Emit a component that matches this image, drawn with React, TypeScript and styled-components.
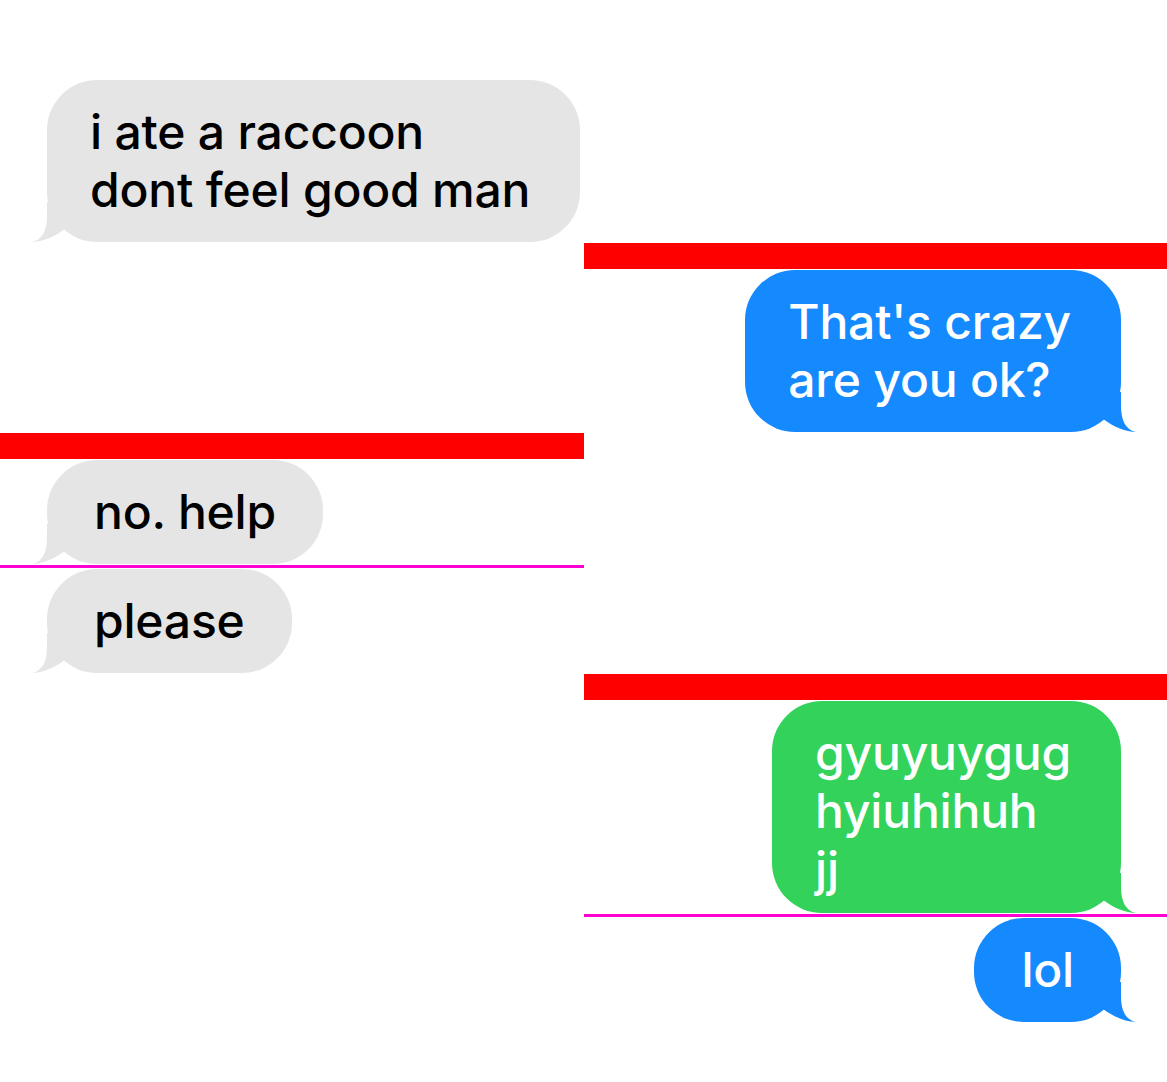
import React from "react";
import styled, { createGlobalStyle } from "styled-components";

const GlobalStyle = createGlobalStyle`
  html, body {
    margin: 0;
    padding: 0;
    background: #ffffff;
  }
  body {
    font-family: Inter, "Noto Sans", "Liberation Sans", sans-serif;
  }
`;

type Side = "left" | "right";
type Tone = "gray" | "blue" | "green";
type MarkerKind = "group" | "same" | "none";

const toneBg: Record<Tone, string> = {
  gray: "#e5e5e5",
  blue: "#1589fe",
  green: "#32d25b",
};

const Thread = styled.main`
  display: flex;
  flex-direction: column;
  gap: 1px;
  width: 1167px;
  padding-top: 80px;
`;

const Row = styled.section<{ $side: Side }>`
  width: 50%;
  align-self: ${(p) => (p.$side === "left" ? "flex-start" : "flex-end")};
  display: flex;
  flex-direction: column;
  gap: 1px;
  align-items: ${(p) => (p.$side === "left" ? "flex-start" : "flex-end")};
`;

const Marker = styled.div<{ $kind: MarkerKind }>`
  align-self: stretch;
  height: ${(p) => (p.$kind === "group" ? "26px" : "3px")};
  background: ${(p) => (p.$kind === "group" ? "#ff0000" : "#ff00d2")};
`;

const Bubble = styled.div<{
  $side: Side;
  $tone: Tone;
  $multi: boolean;
  $bottom: number;
}>`
  position: relative;
  box-sizing: border-box;
  margin: ${(p) => (p.$side === "left" ? "0 0 0 47px" : "0 46px 0 0")};
  padding: 23px ${(p) => (p.$multi ? "50px" : "47px")} ${(p) => p.$bottom}px
    ${(p) => (p.$multi ? "43px" : "47px")};
  border-radius: 50px;
  background: ${(p) => toneBg[p.$tone]};
  color: ${(p) => (p.$tone === "gray" ? "#000000" : "#ffffff")};
  font-family: Inter, "Noto Sans", "Liberation Sans", sans-serif;
  font-size: 48px;
  font-weight: 500;
  letter-spacing: -0.2px;
  line-height: 58px;
  white-space: nowrap;
`;

const Tail = styled.svg<{ $side: Side }>`
  position: absolute;
  bottom: 0;
  width: 56px;
  height: 40px;
  ${(p) =>
    p.$side === "right"
      ? "right: -16px;"
      : "left: -16px; transform: scaleX(-1);"}
`;

type Message = {
  side: Side;
  tone: Tone;
  marker: MarkerKind;
  lines: string[];
  bottom?: number;
};

const messages: Message[] = [
  { side: "left", tone: "gray", marker: "none", lines: ["i ate a raccoon", "dont feel good man"] },
  { side: "right", tone: "blue", marker: "group", lines: ["That's crazy", "are you ok?"] },
  { side: "left", tone: "gray", marker: "group", lines: ["no. help"] },
  { side: "left", tone: "gray", marker: "same", lines: ["please"] },
  { side: "right", tone: "green", marker: "group", lines: ["gyuyuygug", "hyiuhihuh", "jj"], bottom: 15 },
  { side: "right", tone: "blue", marker: "same", lines: ["lol"] },
];

function BubbleTail({ side, tone }: { side: Side; tone: Tone }) {
  return (
    <Tail $side={side} viewBox="0 0 56 40" aria-hidden="true">
      <path
        d="M40 0 L40 14 C40 29 45 38 55 40 C45 40 33 35 22 27 L22 0 Z"
        fill={toneBg[tone]}
      />
    </Tail>
  );
}

export default function App() {
  return (
    <>
      <GlobalStyle />
      <Thread>
        {messages.map((m, i) => (
          <Row key={i} $side={m.side}>
            {m.marker !== "none" && <Marker $kind={m.marker} />}
            <Bubble
              $side={m.side}
              $tone={m.tone}
              $multi={m.lines.length > 1}
              $bottom={m.bottom ?? 23}
            >
              {m.lines.map((l, j) => (
                <React.Fragment key={j}>
                  {j > 0 && <br />}
                  {l}
                </React.Fragment>
              ))}
              <BubbleTail side={m.side} tone={m.tone} />
            </Bubble>
          </Row>
        ))}
      </Thread>
    </>
  );
}
